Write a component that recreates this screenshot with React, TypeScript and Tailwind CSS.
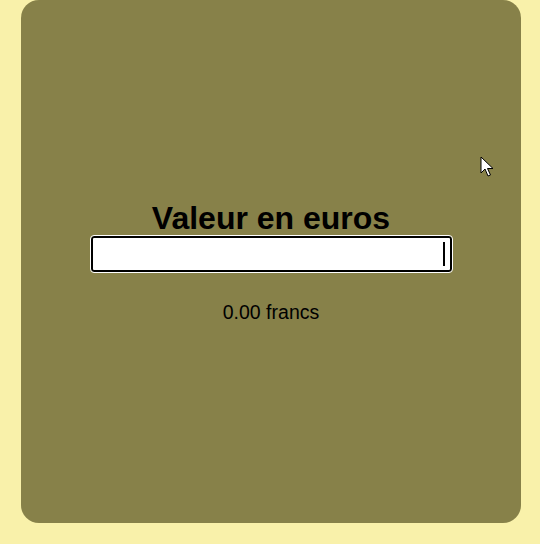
import React from 'react';

export default function App() {
  return (
    <div className="w-[540px] h-[544px] bg-[#f9f1aa] pl-[21px] pr-[19px] pb-[21px] font-['Liberation_Sans',Arial,sans-serif] text-black">
      <div className="relative h-full w-full rounded-[18px] bg-[#878149] flex flex-col items-center justify-center">
        <h1 className="text-[32px] font-bold leading-[36px]">Valeur en euros</h1>
        <div className="relative">
          <input
            type="text"
            readOnly
            className="block h-9 w-[361px] rounded-[3px] border-2 border-black bg-white outline outline-1 outline-white"
          />
          {/* caret */}
          <span className="absolute right-[7px] top-[6px] h-6 w-[2px] bg-black" />
        </div>
        <p className="mt-[29px] text-[19.5px] leading-[22px]">0.00 francs</p>

        {/* mouse pointer */}
        <svg
          className="absolute left-[459px] top-[156px]"
          width="14"
          height="22"
          viewBox="0 0 14 22"
        >
          <path
            d="M1 1 L1 17 L5 13 L8 20 L10.5 19 L7.5 12.5 L13 12.5 Z"
            fill="#fff"
            stroke="#000"
            strokeWidth="1"
            strokeLinejoin="round"
          />
        </svg>
      </div>
    </div>
  );
}
